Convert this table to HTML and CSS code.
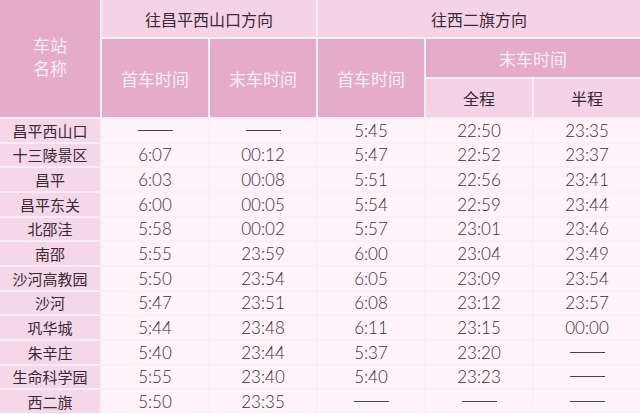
FILE: index.html
```html
<!DOCTYPE html>
<html lang="zh-CN">
<head>
<meta charset="utf-8">
<link rel="stylesheet" href="styles.css">
</head>
<body>
<div class="grid">
  <div class="h-dark station-head"><span class="ln">车站</span><span class="ln">名称</span></div>
  <div class="h-light dir1">往昌平西山口方向</div>
  <div class="h-light dir2">往西二旗方向</div>
  <div class="h-dark c2 r23">首车时间</div>
  <div class="h-dark c3 r23">末车时间</div>
  <div class="h-dark c4 r23">首车时间</div>
  <div class="h-dark last-head">末车时间</div>
  <div class="h-light sub">全程</div>
  <div class="h-light sub">半程</div>

  <div class="st">昌平西山口</div><div class="d"><span class="dash"></span></div><div class="d"><span class="dash"></span></div><div class="d">5:45</div><div class="d">22:50</div><div class="d">23:35</div>
  <div class="st">十三陵景区</div><div class="d">6:07</div><div class="d">00:12</div><div class="d">5:47</div><div class="d">22:52</div><div class="d">23:37</div>
  <div class="st">昌平</div><div class="d">6:03</div><div class="d">00:08</div><div class="d">5:51</div><div class="d">22:56</div><div class="d">23:41</div>
  <div class="st">昌平东关</div><div class="d">6:00</div><div class="d">00:05</div><div class="d">5:54</div><div class="d">22:59</div><div class="d">23:44</div>
  <div class="st">北邵洼</div><div class="d">5:58</div><div class="d">00:02</div><div class="d">5:57</div><div class="d">23:01</div><div class="d">23:46</div>
  <div class="st">南邵</div><div class="d">5:55</div><div class="d">23:59</div><div class="d">6:00</div><div class="d">23:04</div><div class="d">23:49</div>
  <div class="st">沙河高教园</div><div class="d">5:50</div><div class="d">23:54</div><div class="d">6:05</div><div class="d">23:09</div><div class="d">23:54</div>
  <div class="st">沙河</div><div class="d">5:47</div><div class="d">23:51</div><div class="d">6:08</div><div class="d">23:12</div><div class="d">23:57</div>
  <div class="st">巩华城</div><div class="d">5:44</div><div class="d">23:48</div><div class="d">6:11</div><div class="d">23:15</div><div class="d">00:00</div>
  <div class="st">朱辛庄</div><div class="d">5:40</div><div class="d">23:44</div><div class="d">5:37</div><div class="d">23:20</div><div class="d"><span class="dash"></span></div>
  <div class="st">生命科学园</div><div class="d">5:55</div><div class="d">23:40</div><div class="d">5:40</div><div class="d">23:23</div><div class="d"><span class="dash"></span></div>
  <div class="st">西二旗</div><div class="d">5:50</div><div class="d">23:35</div><div class="d"><span class="dash"></span></div><div class="d"><span class="dash"></span></div><div class="d"><span class="dash"></span></div>
</div>
</body>
</html>
```
FILE: styles.css
```css
html, body {
  margin: 0;
  padding: 0;
  background: #ffffff;
  overflow: hidden;
}
body {
  width: 640px;
  height: 414px;
  font-family: "Noto Sans CJK SC", "Noto Sans", sans-serif;
}
.grid {
  display: grid;
  grid-template-columns: 100px 106px 106px 106px 106px 106px;
  grid-template-rows: 37px 38px 38px repeat(12, 22.67px);
  gap: 2px;
  background: #fbeef5;
  width: 640px;
}
.grid > div {
  display: flex;
  align-items: center;
  justify-content: center;
  text-align: center;
}
.h-dark {
  background: #e5abcb;
  color: #fbeef5;
  font-size: 17px;
}
.h-light {
  background: #f4d3e5;
  color: #3a2a32;
  font-size: 16px;
}
.station-head {
  grid-column: 1;
  grid-row: 1 / 4;
  padding-bottom: 4px;
}
.grid > .station-head {
  flex-direction: column;
  gap: 1px;
}
.ln {
  display: block;
  line-height: 22px;
}
.dir1 { grid-column: 2 / 4; grid-row: 1; }
.dir2 { grid-column: 4 / 7; grid-row: 1; }
.r23 { grid-row: 2 / 4; }
.c2 { grid-column: 2; }
.c3 { grid-column: 3; }
.c4 { grid-column: 4; }
.last-head { grid-column: 5 / 7; grid-row: 2; }
.sub { grid-row: 3; }
.st {
  background: #f5d7e8;
  color: #3a2a32;
  font-size: 15px;
}
.d {
  background: #fdf3f8;
  color: #3a3035;
  font-family: Lato, "Open Sans", sans-serif;
  font-weight: 300;
  font-size: 17px;
}
.dash {
  display: block;
  width: 35px;
  height: 1px;
  background: #4a4045;
}
```
